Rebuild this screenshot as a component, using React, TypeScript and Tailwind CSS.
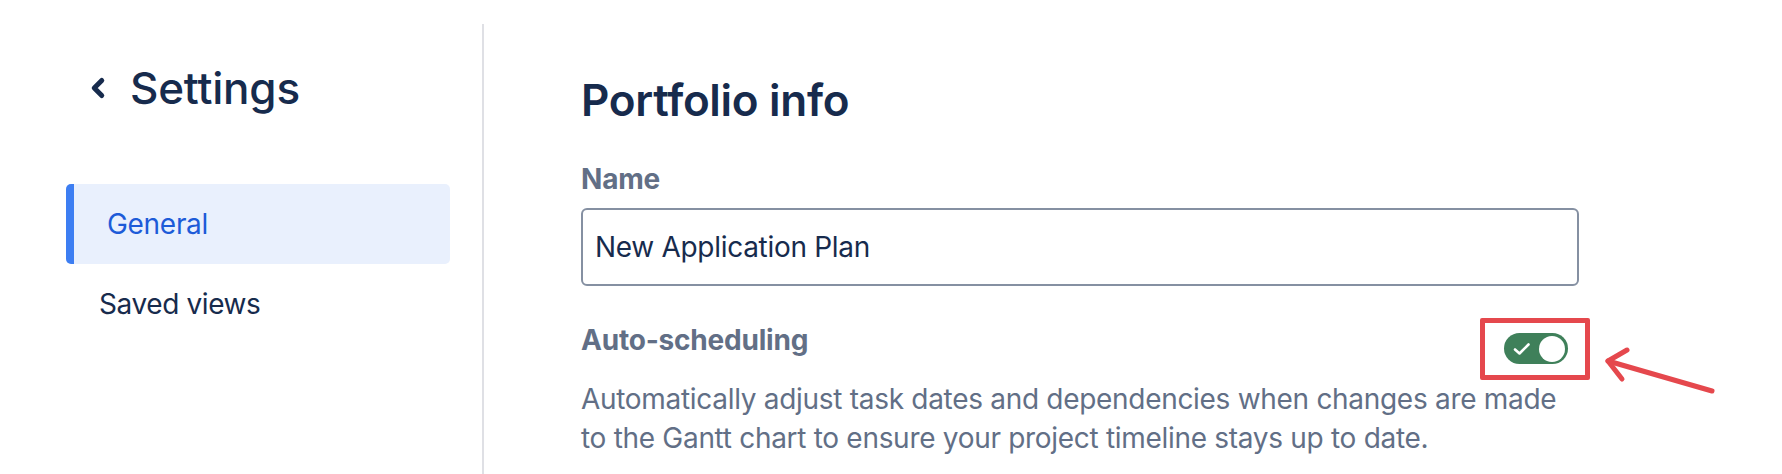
import { ChevronLeft } from 'lucide-react';

const font = { fontFamily: 'Inter, "Noto Sans", sans-serif' };

const SideNav = () => {
  return (
    <aside className="w-[482px] shrink-0 pl-[66px] pr-[32px] pt-[52px]">
      <div className="flex items-center h-[72px]">
        <ChevronLeft className="w-[30px] h-[30px] text-[#172b4d] ml-[17px]" strokeWidth={4} />
        <h2 className="ml-[17px] text-[44px] font-medium text-[#172b4d] tracking-[-0.2px]">Settings</h2>
      </div>
      <nav className="mt-[60px] flex flex-col">
        <div className="flex h-[80px] rounded-[5px] bg-[#e9f0fd] overflow-hidden">
          <div className="w-[8px] bg-[#3d7ef2]" />
          <span className="pl-[33px] flex items-center text-[28px] text-[#1d5bd8] tracking-[-0.3px]">General</span>
        </div>
        <div className="flex h-[80px] items-center pl-[33px] text-[28px] text-[#172b4d] tracking-[-0.4px]">Saved views</div>
      </nav>
    </aside>
  );
};

const Toggle = () => {
  return (
    <div className="relative">
      <div className="w-[64px] h-[31px] rounded-full bg-[#3f805a] flex items-center justify-between pl-[9px] pr-[3px]">
        <svg width="18" height="14" viewBox="0 0 18 14">
          <path d="M2 7.5 L6.5 11.5 L15.5 2.5" fill="none" stroke="#fff" strokeWidth="2.6" strokeLinecap="round" strokeLinejoin="round" />
        </svg>
        <div className="w-[26px] h-[26px] rounded-full bg-white" />
      </div>
      {/* annotation */}
      <div className="absolute left-[-24px] top-[-15px] w-[110px] h-[62px] border-[5px] border-[#e5484d] rounded-[2px]" />
      <svg className="absolute left-[36px] top-[-10px] overflow-visible" width="120" height="60" viewBox="0 0 120 60">
        <g fill="none" stroke="#e5484d" strokeWidth="5" strokeLinecap="round" strokeLinejoin="round">
          <path d="M68 38 L172 68" />
          <path d="M87 27 L68 38 L82 56" />
        </g>
      </svg>
    </div>
  );
};

const App = () => {
  return (
    <div className="flex h-[474px] bg-white overflow-hidden" style={font}>
      <SideNav />
      <div className="w-[2px] bg-[#dfe0e5] mt-[24px] shrink-0" />
      <main className="flex-1 pl-[97px] pr-[203px] pt-[72px]">
        <h1 className="text-[44px] leading-[56px] font-semibold text-[#172b4d] tracking-[-0.3px]">Portfolio info</h1>
        <label className="block mt-[35px] text-[28px] leading-[32px] font-bold text-[#626f86] tracking-[-0.2px]">Name</label>
        <div className="mt-[13px] h-[78px] border-2 border-[#8590a2] rounded-[6px] flex items-center px-[12px]">
          <span className="text-[28px] text-[#172b4d] tracking-[-0.3px]">New Application Plan</span>
        </div>
        <div className="mt-[38px] flex items-start justify-between">
          <span className="text-[28px] leading-[32px] font-bold text-[#626f86] tracking-[-0.2px]">Auto-scheduling</span>
          <div className="mt-[9px] mr-[11px]">
            <Toggle />
          </div>
        </div>
        <p className="mt-[16px] text-[28px] leading-[39px] text-[#626f86] tracking-[-0.3px]">
          Automatically adjust task dates and dependencies when changes are made to the Gantt chart to ensure your project timeline stays up to date.
        </p>
      </main>
    </div>
  );
};

export default App;
